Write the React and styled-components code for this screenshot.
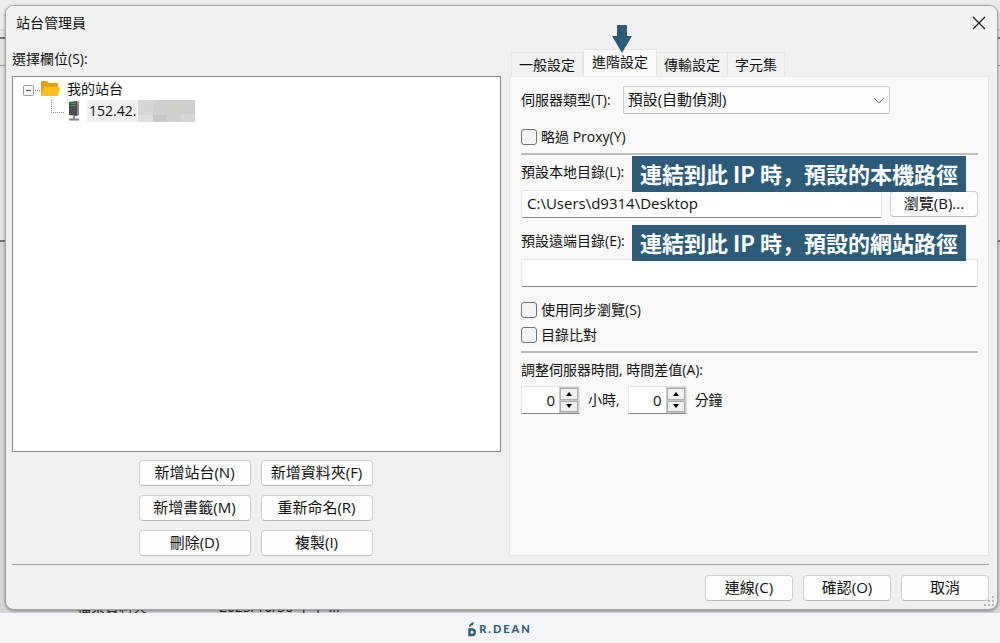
import React, { useState } from 'react'
import styled, { createGlobalStyle } from 'styled-components'

const GlobalStyle = createGlobalStyle`
  * {
    box-sizing: border-box;
  }
  body {
    color: #111;
    font-family: 'Open Sans', 'Noto Sans CJK TC', sans-serif;
    font-size: 14px;
    line-height: 20px;
    margin: 0;
  }
  button,
  input,
  select {
    color: inherit;
    font: inherit;
  }
`
const Page = styled.div`
  display: flex;
  flex-direction: column;
  min-height: 100vh;
`
const Desktop = styled.div`
  background: linear-gradient(
    #ebebeb 0 29px, #d8d8d8 29px 31px, #e6e6e6 31px 37px, #777 37px 39px,
    #e6e6e6 39px 65px, #999 65px 66px, #e4e4e4 66px 240px, #777 240px 242px,
    #d6d6d6 242px
  );
  display: flex;
  flex: 1;
  flex-direction: column;
  overflow: hidden;
  padding: 5px 2px 3px 5px;
  position: relative;
`
const FileRow = styled.div`
  bottom: -4px;
  color: #222;
  display: flex;
  gap: 72px;
  left: 77px;
  position: absolute;
`
const Dialog = styled.main`
  background: #f0f0f0;
  border: 1px solid #a6a6a6;
  border-radius: 9px;
  box-shadow: 0 1px 3px rgba(0, 0, 0, 0.4);
  display: flex;
  flex: 1;
  flex-direction: column;
  position: relative;
`
const TitleBar = styled.header`
  align-items: center;
  background: #f3f3f3;
  border-radius: 8px 8px 0 0;
  display: flex;
  height: 34px;
  justify-content: space-between;
  padding: 0 11px 0 10px;
`
const Title = styled.h1`
  font-size: 14px;
  font-weight: normal;
  margin: 0;
`
const CloseButton = styled.button`
  background: none;
  border: 0;
  display: flex;
  padding: 0;
`
const Columns = styled.div`
  display: grid;
  flex: 1;
  gap: 8px;
  grid-template-columns: 489fr 480fr;
  padding: 9px 8px 8px 6px;
`
const Column = styled.section`
  display: flex;
  flex-direction: column;
`
const TreeLabel = styled.span`
  margin-bottom: 7px;
`
const Tree = styled.ul`
  background: #fff;
  border: 1px solid #828790;
  flex: 1;
  list-style: none;
  margin: 0;
  padding: 1px 10px;
`
const TreeRow = styled.li`
  align-items: center;
  display: flex;
  height: 22px;
  padding-left: ${props => props.$level ? 28 : 0}px;
`
const TreeText = styled.span`
  align-items: center;
  background: ${props => props.$selected ? '#f0f0f0' : 'none'};
  display: flex;
  gap: 2px;
  height: 22px;
  margin-left: ${props => props.$selected ? 6 : 2}px;
  padding-left: ${props => props.$selected ? 2 : 3}px;
`
const TreeButtons = styled.div`
  display: grid;
  gap: 9px 10px;
  grid-template-columns: 112px 112px;
  justify-content: center;
  padding: 8px 2px 0 0;
`
const Button = styled.button`
  background: #fdfdfd;
  border: 1px solid #d0d0d0;
  border-bottom-color: #bbb;
  border-radius: 4px;
  font-size: 15px;
  height: 26px;
  line-height: 20px;
  min-width: 88px;
  padding: 0 4px 2px;
`
const Tabs = styled.div`
  align-items: flex-end;
  display: flex;
  height: 27px;
  padding: 0 2px;
`
const Tab = styled.button`
  background: ${props => props.$active ? '#f9f9f9' : '#f2f2f2'};
  border: 1px solid #e5e5e5;
  border-bottom: 0;
  border-left-width: ${props => props.$first || props.$active ? 1 : 0}px;
  height: ${props => props.$active ? 27 : 24}px;
  padding: 0 ${props => props.$active ? 8 : 7}px ${props => props.$active ? 3 : 0}px;
  position: relative;
`
const Arrow = styled.svg`
  left: 28px;
  position: absolute;
  top: -25px;
`
const Panel = styled.div`
  background: #f9f9f9;
  border: 1px solid #e5e5e5;
  border-top-color: #ececec;
  flex: 1;
  padding: 9px 10px 9px 11px;
`
const Group = styled.div`
  border-bottom: ${props => props.$last ? 0 : 2}px solid #bdbdbd;
  display: flex;
  flex-direction: column;
  padding-bottom: 6px;
  padding-top: ${props => props.$first ? 0 : 7}px;
`
const Row = styled.div`
  align-items: center;
  display: flex;
  gap: ${props => props.$wide ? 12 : 8}px;
  position: relative;
`
const Field = styled.div`
  display: flex;
  flex-direction: column;
  gap: 8px;
  margin-bottom: 13px;
`
const SelectBox = styled.div`
  flex: 0 1 267px;
  position: relative;

  svg {
    position: absolute;
    right: 5px;
    top: 11px;
  }
`
const Select = styled.select`
  appearance: none;
  background: #fdfdfd;
  border: 1px solid #ccc;
  border-bottom-color: #bbb;
  border-radius: 2px;
  display: block;
  font-size: 15px;
  height: 28px;
  padding: 0 20px 2px 4px;
  width: 100%;
`
const TextInput = styled.input`
  background: #fff;
  border: 1px solid #e6e6e6;
  border-bottom: 1px solid #868686;
  border-radius: 2px;
  flex: 1;
  font-size: 15px;
  height: 28px;
  min-height: 28px;
  min-width: 0;
  padding: 0 5px 3px;
`
const CheckLabel = styled.label`
  align-items: center;
  display: flex;
  gap: 4px;
  margin-top: ${props => props.$tight ? 5 : 0}px;
`
const CheckBox = styled.input`
  appearance: none;
  background: #f5f5f5;
  border: 1px solid #727272;
  border-radius: 3px;
  height: 16px;
  margin: 0;
  width: 16px;

  &:checked {
    background: #2c5c7a;
  }
`
const Callout = styled.strong`
  background: #2c5c7a;
  color: #fff;
  font-family: 'Noto Sans CJK JP', sans-serif;
  font-size: 22px;
  font-weight: 700;
  left: 111px;
  line-height: 34px;
  padding: 0 8px 2px;
  position: absolute;
  top: -6px;
  white-space: nowrap;
  z-index: 1;
`
const SpinBox = styled.div`
  background: #fff;
  border: 1px solid #e6e6e6;
  border-bottom-color: #868686;
  display: flex;
  height: 28px;
  width: 59px;
`
const SpinInput = styled.input`
  appearance: textfield;
  background: none;
  border: 0;
  flex: 1;
  font-size: 15px;
  min-width: 0;
  padding: 0 4px 0 0;
  text-align: right;

  &::-webkit-inner-spin-button {
    appearance: none;
    margin: 0;
  }
`
const SpinButtons = styled.div`
  background: #c8c8c8;
  display: grid;
  gap: 1px;
  grid-template-rows: 1fr 1fr;
  padding: 1px;
  width: 20px;
`
const SpinButton = styled.button`
  align-items: center;
  background: #f0f0f0;
  border: 1px solid #adadad;
  display: flex;
  justify-content: center;
  padding: 0;
`
const Actions = styled.footer`
  border-top: 1px solid #a0a0a0;
  display: flex;
  gap: 10px;
  justify-content: flex-end;
  margin: 0 8px 0 6px;
  padding: 10px 0 8px;
`
const Grip = styled.svg`
  bottom: 3px;
  position: absolute;
  right: 3px;
`
const Brand = styled.div`
  align-items: center;
  background: #f4f6f9;
  color: #2c5c7a;
  display: flex;
  font-family: Lato, sans-serif;
  font-size: 11px;
  font-weight: 900;
  gap: 3px;
  height: 30px;
  justify-content: center;
  letter-spacing: 2px;
  padding-top: 2px;
`

const FolderIcon = () => (
  <svg width='39' height='20' viewBox='0 0 39 20' aria-hidden='true'>
    <rect x='.5' y='6.500' width='10' height='10' rx='1' fill='#fafafa' stroke='#999' />
    <path d='M3 11.500h5' stroke='#3b5a9a' />
    <path d='M12 11.500h6' stroke='#888' strokeDasharray='1 1' />
    <path d='M18 3q0-1 1-1h5l2 2h8q1 0 1 1v11H18z' fill='#e8a010' />
    <path d='M21 8h15q1 0 1 1l-2 7q0 1-1 1H18z' fill='#ffc01c' />
  </svg>
)

const ServerIcon = () => (
  <svg width='30' height='22' viewBox='0 0 30 22' aria-hidden='true'>
    <path d='M.5 0v12.500H13' fill='none' stroke='#888' strokeDasharray='1 1' />
    <path d='M18 2l8-1v15l-8-1z' fill='#4c4c4c' />
    <path d='M26 1l2 1v13l-2 1z' fill='#8a8a8a' />
    <path d='M20 3.500h5M20 5.500h5' stroke='#3fae49' />
    <path d='M23 16v3M18 19.500h10' stroke='#6c8ca0' strokeWidth='2' />
  </svg>
)

const Mosaic = () => (
  <svg width='57' height='22' viewBox='0 0 57 22' aria-hidden='true'>
    <rect width='57' height='22' fill='#cfcfcf' />
    <path d='M0 0h15v15H0zM43 14h14v8H43z' fill='#d6d6d6' />
    <path d='M15 15h14v7H15z' fill='#c6c6c6' />
    <path d='M30 0h13v14H30z' fill='#d1cec8' />
    <path d='M0 15h15v7H0z' fill='#dedede' />
  </svg>
)

const BrandMark = () => (
  <svg width='8' height='15' viewBox='0 0 8 15' aria-hidden='true'>
    <path d='M1 5q0-4 5-5l-1 3q-2 0-3 2z' fill='#2c5c7a' />
    <path d='M1.500 7.500h2.500a2.700 2.700 0 0 1 0 5.500H1.500z' fill='none' stroke='#2c5c7a' strokeWidth='2.400' />
  </svg>
)

const Spinner = (props) => {
  const { label } = props
  const [value, setValue] = useState(0)

  return (
    <SpinBox>
      <SpinInput
        type='number'
        aria-label={label}
        value={value}
        onChange={e => setValue(Number(e.target.value))}
      />
      <SpinButtons>
        <SpinButton type='button' aria-label={`${label} +`} onClick={() => setValue(value + 1)}>
          <svg width='6' height='4' viewBox='0 0 6 4'><path d='M0 4l3-4 3 4z' /></svg>
        </SpinButton>
        <SpinButton type='button' aria-label={`${label} -`} onClick={() => setValue(value - 1)}>
          <svg width='6' height='4' viewBox='0 0 6 4'><path d='M0 0l3 4 3-4z' /></svg>
        </SpinButton>
      </SpinButtons>
    </SpinBox>
  )
}

const Check = (props) => {
  const { children, tight } = props

  return (
    <CheckLabel $tight={tight}>
      <CheckBox type='checkbox' />
      {children}
    </CheckLabel>
  )
}

const SiteTree = () => (
  <Column>
    <TreeLabel id='tree-label'>選擇欄位(S):</TreeLabel>
    <Tree aria-labelledby='tree-label'>
      <TreeRow>
        <FolderIcon />
        <TreeText>我的站台</TreeText>
      </TreeRow>
      <TreeRow $level={1}>
        <ServerIcon />
        <TreeText $selected>
          152.42.
          <Mosaic />
        </TreeText>
      </TreeRow>
    </Tree>
    <TreeButtons>
      <Button>新增站台(N)</Button>
      <Button>新增資料夾(F)</Button>
      <Button>新增書籤(M)</Button>
      <Button>重新命名(R)</Button>
      <Button>刪除(D)</Button>
      <Button>複製(I)</Button>
    </TreeButtons>
  </Column>
)

const AdvancedSettings = () => (
  <Panel>
    <Group $first>
      <Field>
        <Row $wide>
          <label htmlFor='server-type'>伺服器類型(T):</label>
          <SelectBox>
            <Select id='server-type'>
              <option>預設(自動偵測)</option>
            </Select>
            <svg width='12' height='7' viewBox='0 0 12 7' aria-hidden='true'>
              <path d='M1 1l5 5 5-5' fill='none' stroke='#777' />
            </svg>
          </SelectBox>
        </Row>
      </Field>
      <Check>略過 Proxy(Y)</Check>
    </Group>
    <Group>
      <Field>
        <Row>
          <label htmlFor='local-dir'>預設本地目錄(L):</label>
          <Callout>連結到此 IP 時，預設的本機路徑</Callout>
        </Row>
        <Row>
          <TextInput id='local-dir' defaultValue='C:\Users\d9314\Desktop' />
          <Button>瀏覽(B)...</Button>
        </Row>
      </Field>
      <Field>
        <Row>
          <label htmlFor='remote-dir'>預設遠端目錄(E):</label>
          <Callout>連結到此 IP 時，預設的網站路徑</Callout>
        </Row>
        <TextInput id='remote-dir' />
      </Field>
      <Check>使用同步瀏覽(S)</Check>
      <Check tight>目錄比對</Check>
    </Group>
    <Group $last>
      <span>調整伺服器時間, 時間差值(A):</span>
    </Group>
    <Row>
      <Spinner label='小時' />
      <span>小時,</span>
      <Spinner label='分鐘' />
      <span>分鐘</span>
    </Row>
  </Panel>
)

const App = () => (
  <Page>
    <GlobalStyle />
    <Desktop>
      <FileRow>
        <span>檔案資料夾</span>
        <span>2023/10/30 下午 ...</span>
      </FileRow>
      <Dialog>
        <TitleBar>
          <Title>站台管理員</Title>
          <CloseButton aria-label='關閉'>
            <svg width='14' height='14' viewBox='0 0 14 14'>
              <path d='M1 1l12 12M13 1L1 13' stroke='#222' strokeWidth='1.300' />
            </svg>
          </CloseButton>
        </TitleBar>
        <Columns>
          <SiteTree />
          <Column>
            <Tabs role='tablist'>
              <Tab role='tab' $first>一般設定</Tab>
              <Tab role='tab' aria-selected='true' $active>
                進階設定
                <Arrow width='20' height='28' viewBox='0 0 20 28' aria-hidden='true'>
                  <path d='M5 0h10v11h5L10 28 0 11h5z' fill='#2c5c7a' />
                </Arrow>
              </Tab>
              <Tab role='tab'>傳輸設定</Tab>
              <Tab role='tab'>字元集</Tab>
            </Tabs>
            <AdvancedSettings />
          </Column>
        </Columns>
        <Actions>
          <Button>連線(C)</Button>
          <Button>確認(O)</Button>
          <Button>取消</Button>
        </Actions>
        <Grip width='10' height='10' viewBox='0 0 10 10' aria-hidden='true'>
          <path d='M8 0h2v2H8zM4 4h2v2H4zM8 4h2v2H8zM0 8h2v2H0zM4 8h2v2H4zM8 8h2v2H8z' fill='#b8b8b8' />
        </Grip>
      </Dialog>
    </Desktop>
    <Brand>
      <BrandMark />
      R.DEAN
    </Brand>
  </Page>
)

export default App
